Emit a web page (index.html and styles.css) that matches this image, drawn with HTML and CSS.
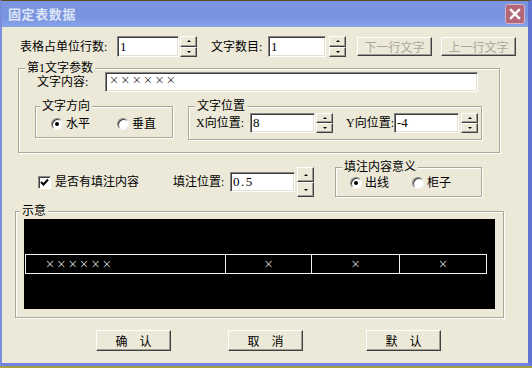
FILE: index.html
```html
<!DOCTYPE html>
<html lang="zh-CN">
<head>
<meta charset="utf-8">
<title>固定表数据</title>
<link rel="stylesheet" href="styles.css">
</head>
<body>
<div class="window">
  <div class="titlebar">
    <span class="title">固定表数据</span>
    <span class="close"><svg width="20" height="20" viewBox="0 0 20 20"><path d="M5.5 5.5 L14.5 14.5 M14.5 5.5 L5.5 14.5" stroke="#fff" stroke-width="2.6" stroke-linecap="square"/></svg></span>
  </div>
  <div class="client">
    <div class="row row1">
      <span class="lbl w97">表格占单位行数:</span>
      <span class="edit w62 h21">1</span>
      <span class="spin ml1"><span class="sb up"></span><span class="sb dn"></span></span>
      <span class="lbl w57 ml14">文字数目:</span>
      <span class="edit w58 h21">1</span>
      <span class="spin ml3"><span class="sb up"></span><span class="sb dn"></span></span>
      <span class="btn disabled bsmall ml11">下一行文字</span>
      <span class="btn disabled bsmall ml9">上一行文字</span>
    </div>

    <div class="group g1">
      <span class="legend">第1文字参数</span>
      <div class="row content-row">
        <span class="lbl w68">文字内容:</span>
        <span class="edit w373 h20"><span class="xs">××××××</span></span>
      </div>
      <div class="subgroups">
        <div class="group g-dir">
          <span class="legend lg4">文字方向</span>
          <div class="row radios">
            <span class="radio on"></span><span class="rtext w51">水平</span>
            <span class="radio"></span><span class="rtext">垂直</span>
          </div>
        </div>
        <div class="group g-pos">
          <span class="legend">文字位置</span>
          <div class="row pos-row">
            <span class="lbl w54">X向位置:</span>
            <span class="edit w65 h20">8</span>
            <span class="spin ml1"><span class="sb up"></span><span class="sb dn"></span></span>
            <span class="lbl w48 ml13">Y向位置:</span>
            <span class="edit w65 h20">-4</span>
            <span class="spin ml2"><span class="sb up"></span><span class="sb dn"></span></span>
          </div>
        </div>
      </div>
    </div>

    <div class="row check-row">
      <span class="check"><svg width="9" height="9" viewBox="0 0 9 9"><path d="M1 4 L3.5 6.5 L8 1.5" fill="none" stroke="#000" stroke-width="2"/></svg></span>
      <span class="ctext">是否有填注内容</span>
      <span class="lbl w57">填注位置:</span>
      <span class="edit w65 h20 spaced">0.5</span>
      <span class="spin ml2"><span class="sb up"></span><span class="sb dn"></span></span>
      <div class="group g-mean">
        <span class="legend">填注内容意义</span>
        <div class="row radios2">
          <span class="radio on"></span><span class="rtext w50">出线</span>
          <span class="radio"></span><span class="rtext">柜子</span>
        </div>
      </div>
    </div>

    <div class="group g-demo">
      <span class="legend lg4">示意</span>
      <div class="canvas">
        <div class="strip">
          <div class="cell c1"><span class="xs">××××××</span></div>
          <div class="cell cc"><span class="xs1">×</span></div>
          <div class="cell cc"><span class="xs1">×</span></div>
          <div class="cell cc last"><span class="xs1">×</span></div>
        </div>
      </div>
    </div>

    <div class="row buttons">
      <span class="btn bbig">确　认</span>
      <span class="btn bbig">取　消</span>
      <span class="btn bbig">默　认</span>
    </div>
  </div>
</div>
</body>
</html>
```
FILE: styles.css
```css
html, body {
  margin: 0;
  padding: 0;
}
body {
  background: #a89e44;
  font-family: "Liberation Serif", "Noto Sans CJK SC", serif;
  font-size: 12px;
  line-height: 14px;
  color: #000;
  width: 532px;
  height: 368px;
  overflow: hidden;
}
.window {
  box-sizing: border-box;
  width: 532px;
  height: 366px;
  border-top: 1px solid #5a4c20;
  border-left: 2px solid #7a8ddc;
  border-right: 4px solid #5f74d4;
  border-bottom: 3px solid #7282e0;
  background: #ece9d8;
  display: flex;
  flex-direction: column;
}
.titlebar {
  height: 26px;
  flex: none;
  display: flex;
  align-items: center;
  justify-content: space-between;
  background: linear-gradient(#7b93de, #7994df 60%, #87a3ea);
  padding: 0 3px 0 6px;
}
.title {
  font-family: "Noto Sans CJK SC", sans-serif;
  font-weight: bold;
  font-size: 13px;
  letter-spacing: 0.6px;
  color: #dce4f7;
  line-height: 16px;
}
.close {
  width: 18px;
  height: 18px;
  border: 1px solid #d9b3c2;
  border-radius: 3px;
  background: #b26678;
  display: flex;
  align-items: center;
  justify-content: center;
}
.close svg { width: 18px; height: 18px; }
.client {
  flex: 1;
  display: flex;
  flex-direction: column;
}
.row {
  display: flex;
  align-items: center;
}
.row1 {
  margin: 9px 0 0 18px;
  height: 21px;
}
.lbl { flex: none; white-space: nowrap; }
.w97 { width: 97px; }
.w57 { width: 57px; }
.w68 { width: 68px; }
.w54 { width: 54px; }
.w48 { width: 48px; }
.ml1 { margin-left: 1px; }
.ml2 { margin-left: 2px; }
.ml3 { margin-left: 3px; }
.ml9 { margin-left: 9px; }
.ml11 { margin-left: 11px; }
.ml13 { margin-left: 13px; }
.ml14 { margin-left: 14px; }

.edit {
  box-sizing: border-box;
  flex: none;
  background: #fff;
  border: 1px solid;
  border-color: #878787 #fff #fff #878787;
  box-shadow: inset 1px 1px 0 #3c3c3c, inset -1px -1px 0 #e4e1d2;
  padding: 0 0 0 2px;
  display: flex;
  align-items: center;
  font-size: 13px;
  white-space: nowrap;
}
.spaced { letter-spacing: 1.5px; }
.w62 { width: 62px; }
.w58 { width: 58px; }
.w65 { width: 65px; }
.w373 { width: 373px; }
.h21 { height: 21px; }
.h20 { height: 20px; }
.xs, .xs1 {
  font-family: "DejaVu Sans", sans-serif;
  font-size: 12px;
  font-weight: 300;
  line-height: 14px;
}
.xs { letter-spacing: 1.3px; }
.edit .xs { margin-top: -4px; margin-left: 1px; }

.spin {
  flex: none;
  width: 17px;
  align-self: stretch;
  display: flex;
  flex-direction: column;
}
.sb {
  flex: 1;
  box-sizing: border-box;
  background: #ece9d8;
  border: 1px solid;
  border-color: #fff #404040 #404040 #fff;
  box-shadow: inset -1px -1px 0 #a09e94;
  display: flex;
  align-items: center;
  justify-content: center;
}
.sb::after {
  content: "";
  width: 0;
  height: 0;
  border-left: 2px solid transparent;
  border-right: 2px solid transparent;
}
.up::after { border-bottom: 2px solid #000; }
.dn::after { border-top: 2px solid #000; }

.btn {
  box-sizing: border-box;
  flex: none;
  background: #ece9d8;
  border: 1px solid;
  border-color: #fff #404040 #404040 #fff;
  box-shadow: inset -1px -1px 0 #a09e94;
  display: flex;
  align-items: center;
  justify-content: center;
  font-family: "Noto Sans CJK SC", sans-serif;
  white-space: nowrap;
}
.bsmall { width: 75px; height: 19px; }
.disabled { color: #aaa79c; }
.bbig { width: 75px; height: 21px; }

.group {
  box-sizing: border-box;
  border: 1px solid #aca899;
  box-shadow: inset 1px 1px 0 #fff, 1px 1px 0 #fff;
  flex: none;
}
.legend {
  display: block;
  width: max-content;
  margin: -8px 0 -6px 6px;
  padding: 0 2px;
  height: 14px;
  line-height: 14px;
  background: #ece9d8;
}
.lg4 { margin-left: 4px; }

.g1 {
  margin: 11px 0 0 16px;
  width: 482px;
  height: 85px;
}
.content-row {
  margin: 3px 0 0 18px;
  height: 20px;
}
.subgroups {
  display: flex;
  align-items: flex-start;
  margin: 14px 0 0 16px;
}
.g-dir {
  width: 138px;
  height: 32px;
}
.g-pos {
  margin-left: 15px;
  width: 294px;
  height: 34px;
}
.radios {
  margin: 10px 0 0 15px;
  height: 14px;
}
.radio {
  box-sizing: border-box;
  flex: none;
  position: relative;
  width: 12px;
  height: 12px;
  border-radius: 50%;
  background: #fff;
  border: 1px solid;
  border-color: #8a8a8a #f4f4f4 #f4f4f4 #8a8a8a;
  box-shadow: inset 1px 1px 0 #404040;
}
.radio.on::after {
  content: "";
  position: absolute;
  left: 3px;
  top: 3px;
  width: 4px;
  height: 4px;
  border-radius: 50%;
  background: #000;
}
.rtext {
  margin-left: 3px;
  white-space: nowrap;
}
.w51 { width: 51px; }
.w50 { width: 47px; }
.pos-row {
  margin: 6px 0 0 7px;
  height: 20px;
}

.check-row {
  margin: 14px 0 0 36px;
  height: 30px;
}
.check {
  box-sizing: border-box;
  flex: none;
  width: 13px;
  height: 13px;
  background: #fff;
  border: 1px solid;
  border-color: #8a8a8a #fff #fff #8a8a8a;
  box-shadow: inset 1px 1px 0 #404040;
  display: flex;
  align-items: center;
  justify-content: center;
}
.ctext {
  margin-left: 4px;
  width: 118px;
  white-space: nowrap;
}
.g-mean {
  margin-left: 21px;
  width: 147px;
  height: 30px;
  align-self: flex-start;
}
.radios2 {
  margin: 8px 0 0 14px;
  height: 14px;
}

.g-demo {
  margin: 14px 0 0 13px;
  width: 489px;
  height: 107px;
}
.canvas {
  margin: 7px 0 0 8px;
  width: 471px;
  height: 90px;
  background: #000;
  padding-top: 35px;
  box-sizing: border-box;
}
.strip {
  margin-left: 1px;
  width: 462px;
  height: 20px;
  box-sizing: border-box;
  border: 1px solid #f0f0f0;
  display: grid;
  grid-template-columns: 200px 86px 88px 86px;
}
.cell {
  box-sizing: border-box;
  border-right: 1px solid #f0f0f0;
  color: #fff;
  display: flex;
  align-items: center;
  height: 18px;
}
.cell.last { border-right: none; }
.c1 { padding-left: 19px; }
.cc { justify-content: center; }

.buttons {
  margin: 12px 0 0 94px;
  gap: 57px;
}
.buttons .btn:last-child { margin-left: 6px; }
```
